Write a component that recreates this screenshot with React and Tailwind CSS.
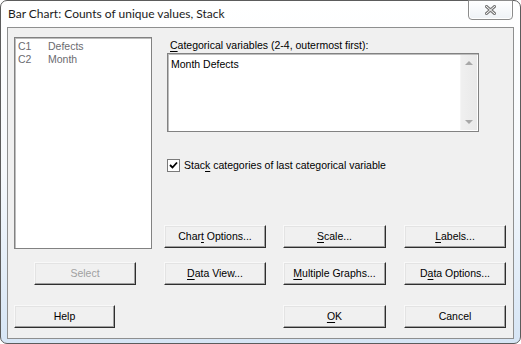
import React from "react";

const font = { fontFamily: '"Liberation Sans", Arial, sans-serif' };

function U({ children }) {
  return <span className="underline underline-offset-[2px] decoration-1">{children}</span>;
}

function Btn({ children, className = "", disabled = false }) {
  return (
    <div
      className={`h-[23px] flex items-center justify-center bg-[#f0f0f0] border border-t-[#f8f8f8] border-l-[#f8f8f8] border-r-[#2e2e2e] border-b-[#2e2e2e] shadow-[inset_-1px_-1px_0_#a0a0a0,inset_1px_1px_0_#e3e3e3] text-[10.5px] ${
        disabled ? "text-[#a0a0a0]" : "text-black"
      } ${className}`}
    >
      <span className="whitespace-pre">{children}</span>
    </div>
  );
}

function CloseButton() {
  return (
    <div className="mt-[-1px] w-[45px] h-[20px] rounded-b-[4px] border border-[#8c8c8c] bg-linear-to-b from-white to-[#eef2f6] flex items-center justify-center shadow-[inset_0_0_0_1px_#ffffff]">
      <svg width="11" height="10" viewBox="0 0 11 10">
        <path d="M1.5 1.5 L9.5 8.5 M9.5 1.5 L1.5 8.5" stroke="#7a7a7a" strokeWidth="3" strokeLinecap="square" fill="none" />
        <path d="M1.5 1.5 L9.5 8.5 M9.5 1.5 L1.5 8.5" stroke="#ffffff" strokeWidth="1" strokeLinecap="square" fill="none" />
      </svg>
    </div>
  );
}

function Checkbox() {
  return (
    <div className="w-[13px] h-[13px] bg-white border border-[#7a7a7a] flex items-center justify-center">
      <svg width="9" height="9" viewBox="0 0 9 9">
        <path d="M1 4 L3.5 6.5 L8 1.5" stroke="#000" strokeWidth="1.8" fill="none" />
      </svg>
    </div>
  );
}

export default function App() {
  return (
    <div className="w-[521px] h-[344px] bg-white" style={font}>
      <div className="w-[521px] h-[344px] rounded-[7px] border border-[#5c5c5c] bg-linear-to-b from-white via-[#f6f9fc] to-[#d6e5f5] flex flex-col">
        {/* title bar */}
        <div className="h-[26px] flex items-start">
          <div className="pl-[7px] pt-[5px] text-[12px] leading-[16px] text-[#1b1b1b]" style={{ fontFamily: 'Lato, "Open Sans", sans-serif' }}>
            Bar Chart: Counts of unique values, Stack
          </div>
          <div className="ml-auto mr-[7px]">
            <CloseButton />
          </div>
        </div>

        {/* client area */}
        <div className="ml-[6px] w-[507px] h-[312px] border border-[#8e8f8f] bg-[#f0f0f0] text-[10.5px] text-black">
          <div className="pt-[9px] flex">
            {/* column list */}
            <div className="ml-[6px] w-[138px] h-[212px] border border-[#828282] bg-white shadow-[inset_1px_1px_0_#bdbdbd]">
              <div className="pt-[2px] pl-[3px] text-[#6b6b70] leading-[13px]">
                <div className="flex"><span className="w-[30px]">C1</span><span>Defects</span></div>
                <div className="flex"><span className="w-[30px]">C2</span><span>Month</span></div>
              </div>
            </div>

            {/* right panel */}
            <div className="ml-[12px] w-[342px] flex flex-col">
              <div className="pl-[6px] h-[16px] leading-[16px]">
                <U>C</U>ategorical variables (2-4, outermost first):
              </div>
              <div className="ml-[3px] w-[312px] h-[79px] border border-[#828282] bg-white shadow-[inset_1px_1px_0_#bdbdbd] flex">
                <div className="flex-1 pl-[3px] pt-[2px] leading-[16px]">Month Defects</div>
                <div className="w-[17px] mr-[1px] my-[1px] bg-linear-to-r from-[#f0f0f0] to-[#e9e9e9] border-l border-[#f5f5f5] flex flex-col items-center justify-between py-[6px]">
                  <div className="w-0 h-0 border-l-[4px] border-r-[4px] border-b-[4px] border-l-transparent border-r-transparent border-b-[#a8a8a8]" />
                  <div className="w-0 h-0 border-l-[4px] border-r-[4px] border-t-[4px] border-l-transparent border-r-transparent border-t-[#a8a8a8]" />
                </div>
              </div>
              <div className="mt-[27px] ml-[3px] h-[13px] flex items-center">
                <Checkbox />
                <span className="ml-[4px] leading-[13px]">
                  Stac<U>k</U> categories of last categorical variable
                </span>
              </div>
              <div className="mt-[53px] flex">
                <Btn className="w-[102px]">Char<U>t</U> Options...</Btn>
                <Btn className="ml-[17px] w-[103px]"><U>S</U>cale...</Btn>
                <Btn className="ml-[18px] w-[102px]"><U>L</U>abels...</Btn>
              </div>
            </div>
          </div>

          <div className="mt-[13px] flex">
            <Btn className="ml-[26px] w-[102px]" disabled>Select</Btn>
            <Btn className="ml-[28px] w-[102px]"><U>D</U>ata View...</Btn>
            <Btn className="ml-[17px] w-[103px]"><U>M</U>ultiple Graphs...</Btn>
            <Btn className="ml-[18px] w-[102px]">D<U>a</U>ta Options...</Btn>
          </div>

          <div className="mt-[20px] flex">
            <Btn className="ml-[6px] w-[101px]">Help</Btn>
            <Btn className="ml-[168px] w-[103px]"><U>O</U>K</Btn>
            <Btn className="ml-[18px] w-[102px]">Cancel</Btn>
          </div>
        </div>
      </div>
    </div>
  );
}
